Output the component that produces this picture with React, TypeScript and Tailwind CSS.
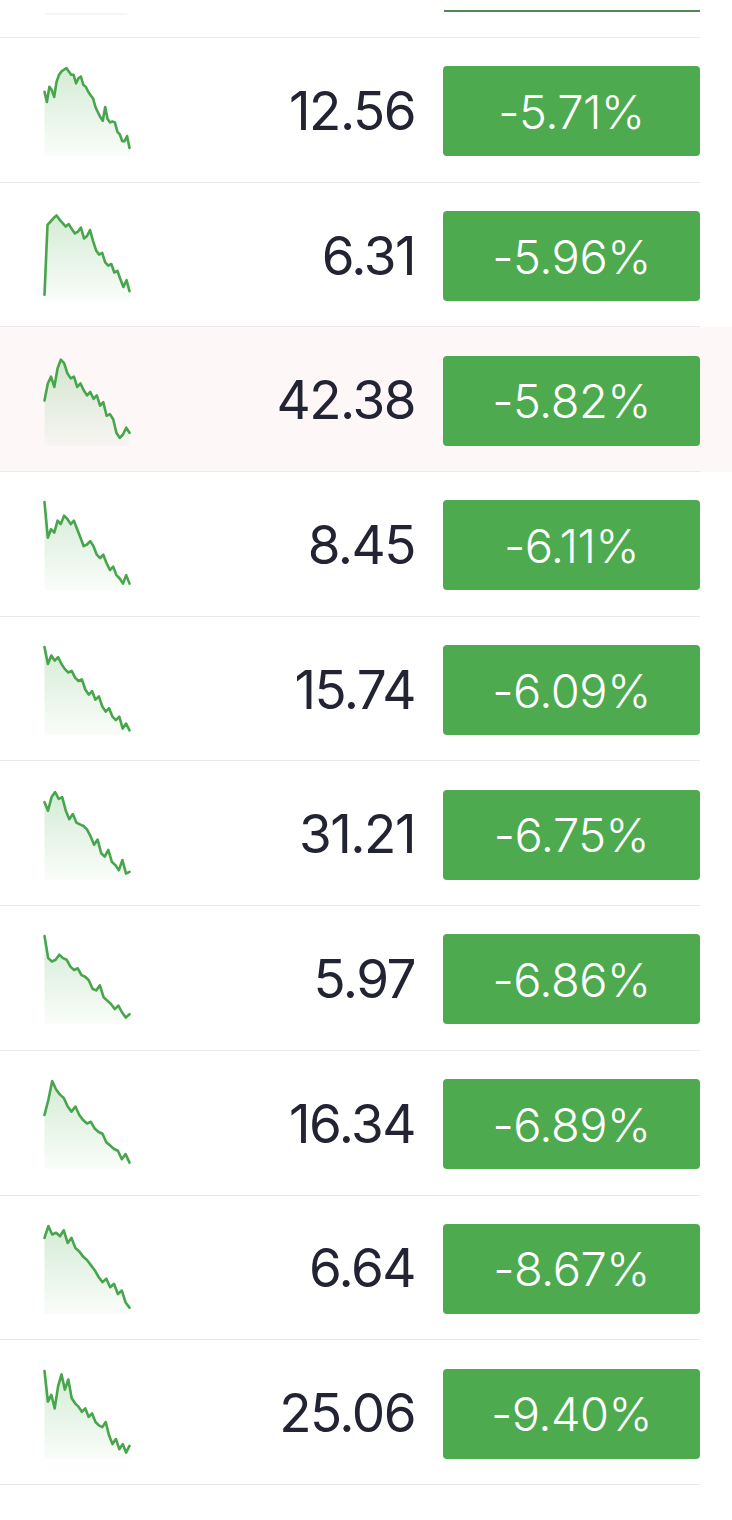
import React from 'react';

interface Quote {
  price: string;
  change: string;
  spark: number[];
  highlight?: boolean;
}

const quotes: Quote[] = [
  { price: '12.56', change: '-5.71%', spark: [28, 40, 22, 26, 34, 16, 8, 4, 2, 0, 4, 8, 8, 18, 12, 10, 20, 22, 28, 32, 36, 46, 52, 58, 62, 46, 60, 64, 63, 64, 75, 78, 86, 86, 80, 94] },
  { price: '6.31', change: '-5.96%', spark: [96, 14, 10, 6, 3, 8, 12, 16, 13, 19, 24, 22, 17, 30, 27, 20, 33, 44, 49, 47, 58, 62, 60, 70, 68, 78, 87, 79, 92] },
  { price: '42.38', change: '-5.82%', spark: [50, 30, 22, 34, 12, 2, 6, 18, 24, 22, 34, 30, 38, 44, 40, 48, 44, 56, 52, 68, 66, 72, 88, 94, 90, 82, 88], highlight: true },
  { price: '8.45', change: '-6.11%', spark: [0, 42, 32, 36, 22, 26, 16, 20, 26, 22, 32, 42, 52, 50, 46, 52, 62, 66, 62, 72, 80, 76, 86, 90, 96, 86, 96] },
  { price: '15.74', change: '-6.09%', spark: [0, 20, 10, 16, 12, 20, 26, 30, 28, 36, 40, 38, 50, 56, 52, 62, 58, 70, 76, 72, 82, 86, 82, 96, 90, 98] },
  { price: '31.21', change: '-6.75%', spark: [12, 22, 6, 0, 8, 6, 22, 32, 26, 36, 38, 40, 44, 52, 62, 56, 72, 76, 68, 82, 86, 92, 80, 96, 94] },
  { price: '5.97', change: '-6.86%', spark: [0, 26, 30, 28, 22, 26, 28, 36, 40, 38, 46, 48, 52, 62, 64, 58, 72, 76, 80, 86, 82, 90, 96, 92] },
  { price: '16.34', change: '-6.89%', spark: [40, 22, 0, 10, 16, 20, 30, 36, 30, 40, 46, 50, 48, 56, 60, 62, 72, 76, 80, 82, 92, 86, 96] },
  { price: '6.64', change: '-8.67%', spark: [14, 0, 10, 8, 12, 5, 20, 14, 26, 30, 36, 40, 46, 52, 60, 66, 62, 72, 68, 80, 76, 90, 96] },
  { price: '25.06', change: '-9.40%', spark: [0, 36, 28, 44, 18, 4, 22, 10, 32, 38, 42, 48, 44, 54, 50, 60, 64, 66, 60, 76, 86, 80, 92, 86, 96, 88] },
];

const W = 88;
const H = 90;

const Sparkline: React.FC<{ data: number[]; id: number }> = ({ data, id }) => {
  const step = (W - 3) / (data.length - 1);
  const pts = data.map((v, i) => [1.5 + i * step, 2 + (v / 100) * (H - 5)]);
  const line = pts.map(([x, y], i) => `${i ? 'L' : 'M'}${x.toFixed(1)} ${y.toFixed(1)}`).join(' ');
  const area = `${line} L${pts[pts.length - 1][0].toFixed(1)} ${H} L1.5 ${H} Z`;
  return (
    <svg width={W} height={H} viewBox={`0 0 ${W} ${H}`} className="shrink-0">
      <defs>
        <linearGradient id={`g${id}`} x1="0" y1="0" x2="0" y2="1">
          <stop offset="0%" stopColor="#4caf50" stopOpacity="0.24" />
          <stop offset="100%" stopColor="#4caf50" stopOpacity="0.03" />
        </linearGradient>
      </defs>
      <path d={area} fill={`url(#g${id})`} />
      <path d={line} fill="none" stroke="#47a64b" strokeWidth="2.6" strokeLinejoin="round" strokeLinecap="round" />
    </svg>
  );
};

const Row: React.FC<{ q: Quote; i: number }> = ({ q, i }) => (
  <div className={q.highlight ? 'w-full bg-[#fdf7f7]' : 'w-full bg-white'}>
    <div className="w-[700px] h-[144.7px] flex items-center pl-[43px] pt-[3px] border-b border-[#e9e9eb]">
      <Sparkline data={q.spark} id={i} />
      <div className="flex-1 text-right pr-[28px] text-[53px] leading-none tracking-[-1.5px] text-[#222433]">
        {q.price}
      </div>
      <div className="w-[257px] h-[90px] rounded-[4px] bg-[#4daa4e] flex items-center justify-center text-white text-[47px] font-light leading-none tracking-[-0.5px]">
        {q.change}
      </div>
    </div>
  </div>
);

const App: React.FC = () => {
  return (
    <div className="w-[732px] h-[1520px] overflow-hidden bg-white" style={{ fontFamily: 'Inter, "Noto Sans", sans-serif' }}>
      {/* row scrolled off the top, only its lower edge left */}
      <div className="w-[700px] h-[38px] flex items-start border-b border-[#e9e9eb]">
        <div className="ml-[45px] mt-[13px] w-[82px] h-[2px] bg-[#f4f8f4]" />
        <div className="ml-auto mt-[10px] w-[256px] h-[2px] bg-[#4e8a50]" />
      </div>
      {quotes.map((q, i) => (
        <Row key={i} q={q} i={i} />
      ))}
    </div>
  );
};

export default App;
